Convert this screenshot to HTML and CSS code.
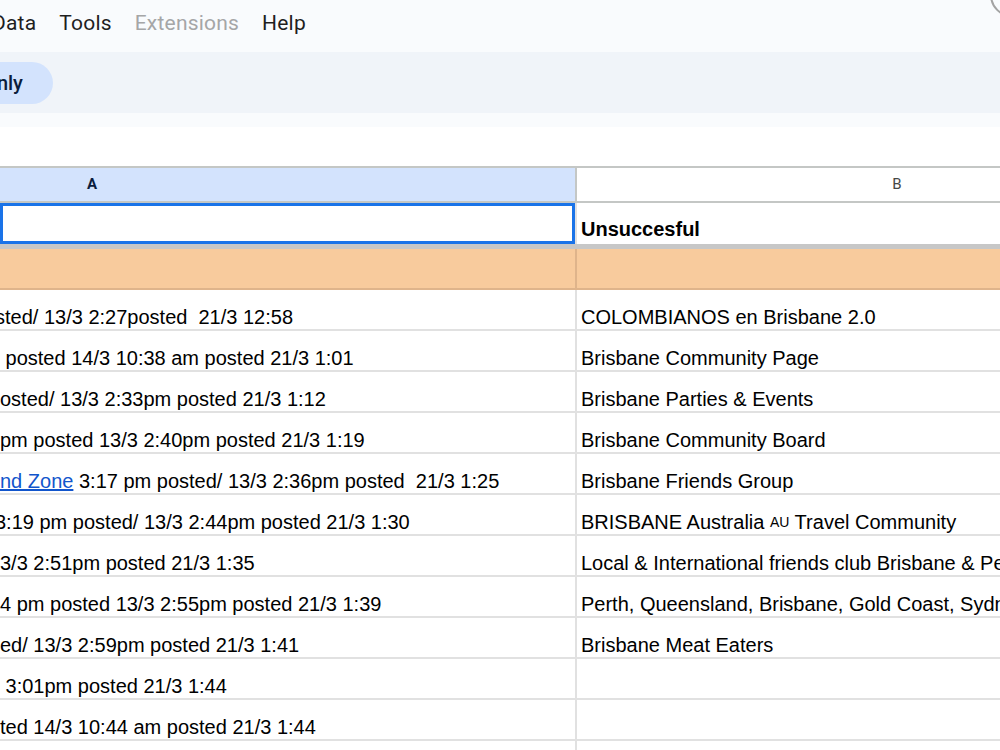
FILE: index.html
```html
<!DOCTYPE html>
<html lang="en">
<head>
<meta charset="utf-8">
<title>Facebook groups - Google Sheets</title>
<link rel="stylesheet" href="styles.css">
</head>
<body>
    <div class="avatar"></div>

    <div class="menubar">
        <span>Data</span>
        <span>Tools</span>
        <span class="disabled">Extensions</span>
        <span>Help</span>
    </div>

    <div class="toolbar">
        <div class="mode-pill">View only</div>
    </div>
    <div class="strip"></div>
    <div class="formula"></div>

    <div class="sheet sheet-top">
        <div class="cell head head-a">A</div>
        <div class="cell head head-b">B</div>

        <div class="cell a selected"></div>
        <div class="cell b title">Unsuccesful</div>
    </div>
    <div class="freeze"></div>
    <div class="sheet">
        <div class="cell a orange"></div>
        <div class="cell b orange"></div>

        <div class="cell a"><span class="cut">sted/ 13/3 2:27posted  21/3 12:58</span></div>
        <div class="cell b">COLOMBIANOS en Brisbane 2.0</div>

        <div class="cell a"> posted 14/3 10:38 am posted 21/3 1:01</div>
        <div class="cell b">Brisbane Community Page</div>

        <div class="cell a">osted/ 13/3 2:33pm posted 21/3 1:12</div>
        <div class="cell b">Brisbane Parties &amp; Events</div>

        <div class="cell a">pm posted 13/3 2:40pm posted 21/3 1:19</div>
        <div class="cell b">Brisbane Community Board</div>

        <div class="cell a"><a href="#">nd Zone</a> 3:17 pm posted/ 13/3 2:36pm posted  21/3 1:25</div>
        <div class="cell b">Brisbane Friends Group</div>

        <div class="cell a"><span class="cut">3:19 pm posted/ 13/3 2:44pm posted 21/3 1:30</span></div>
        <div class="cell b">BRISBANE Australia <span class="flag">AU</span> Travel Community</div>

        <div class="cell a">3/3 2:51pm posted 21/3 1:35</div>
        <div class="cell b">Local &amp; International friends club Brisbane &amp; Perth</div>

        <div class="cell a">4 pm posted 13/3 2:55pm posted 21/3 1:39</div>
        <div class="cell b">Perth, Queensland, Brisbane, Gold Coast, Sydney</div>

        <div class="cell a">ed/ 13/3 2:59pm posted 21/3 1:41</div>
        <div class="cell b">Brisbane Meat Eaters</div>

        <div class="cell a"> 3:01pm posted 21/3 1:44</div>
        <div class="cell b"></div>

        <div class="cell a">ted 14/3 10:44 am posted 21/3 1:44</div>
        <div class="cell b"></div>

        <div class="cell a"></div>
        <div class="cell b"></div>
    </div>
</body>
</html>
```

FILE: styles.css
```css
body {
    margin: 0;
    width: 1000px;
    height: 750px;
    overflow: hidden;
    position: relative;
    background-color: #ffffff;
    font-family: "Liberation Sans", Arial, sans-serif;
}

/* top right account ring, mostly scrolled out of view */
.avatar {
    position: absolute;
    left: 990px;
    top: -27px;
    width: 40px;
    height: 40px;
    border: 2px solid #a3a3a3;
    border-radius: 50%;
}

.menubar {
    height: 52px;
    box-sizing: border-box;
    padding-top: 11px;
    margin-left: -8px;
    display: flex;
    align-items: flex-start;
    gap: 23px;
    background-color: #f9fbfd;
    font-family: Roboto, sans-serif;
    font-size: 21px;
    letter-spacing: 0.2px;
    color: #1f1f1f;
}
.menubar .disabled {
    color: #a5a6a7;
}

.toolbar {
    height: 61px;
    display: flex;
    align-items: center;
    background-color: #f0f4f9;
}
.mode-pill {
    height: 42px;
    margin-left: -79px;
    padding: 0 30px 0 16px;
    display: flex;
    align-items: center;
    border-radius: 21px;
    background-color: #d3e3fd;
    color: #0b1d3c;
    font-family: Roboto, sans-serif;
    font-weight: 500;
    font-size: 20px;
}

.strip {
    height: 14px;
    background-color: #f9fbfd;
}
.formula {
    height: 39px;
    background-color: #ffffff;
}

.sheet {
    display: grid;
    grid-template-columns: 577px 640px;
    grid-auto-rows: 41px;
}
.sheet-top {
    grid-template-rows: 37px 41px;
}
.cell {
    box-sizing: border-box;
    display: flex;
    align-items: flex-end;
    padding: 0 4px 0 4px;
    overflow: hidden;
    white-space: pre;
    font-size: 20px;
    line-height: 23px;
    color: #000000;
    border-bottom: 2px solid #e1e1e1;
}
.cell.a {
    padding-left: 0;
    border-right: 2px solid #e1e1e1;
}
.cell a {
    color: #1155cc;
    text-decoration: underline;
}
.cut {
    margin-left: -5px;
}
.flag {
    font-size: 14px;
}

.head {
    align-items: center;
    padding: 0;
    border-top: 2px solid #c4c7c5;
    border-bottom: 2px solid #c4c7c5;
    font-family: Roboto, sans-serif;
    font-size: 15px;
}
.head-a {
    padding-left: 87px;
    background-color: #d3e3fd;
    color: #0b1d3c;
    font-weight: bold;
    border-right: 2px solid #c4c7c5;
}
.head-b {
    justify-content: center;
    color: #444746;
}

.selected {
    border-bottom: none;
    box-shadow: inset 0 0 0 3px #1a73e8;
}
.title {
    border-bottom: none;
    padding-bottom: 3px;
    font-weight: bold;
}

.freeze {
    height: 5px;
    background-color: #c7c7c7;
}

.orange {
    background-color: #f8cb9d;
    border-bottom-color: #dfb48b;
}
.cell.a.orange {
    border-right-color: #dfb48b;
}
```
